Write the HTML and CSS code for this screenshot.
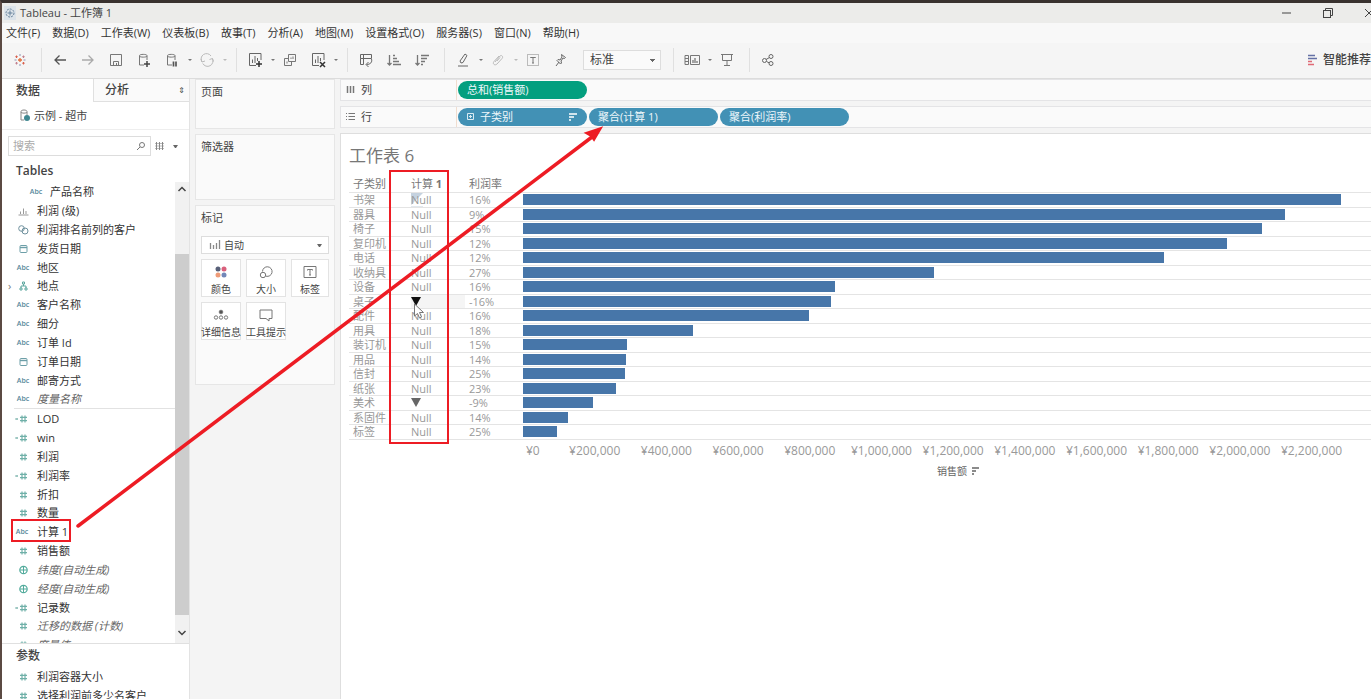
FILE: index.html
```html
<!DOCTYPE html>
<html lang="zh-CN">
<head>
<meta charset="utf-8">
<title>Tableau - 工作簿 1</title>
<link rel="stylesheet" href="styles.css">
</head>
<body>
<svg class="defs" aria-hidden="true">
  <symbol id="hash" viewBox="0 0 16 10"><path d="M5 3.3h7M5 6.7h7M7 1.5v7M10 1.5v7" fill="none" stroke="#6fb0a8" stroke-width="1.2"/></symbol>
  <symbol id="calchash" viewBox="0 0 16 10"><path d="M5 3.3h7M5 6.7h7M7 1.5v7M10 1.5v7" fill="none" stroke="#6fb0a8" stroke-width="1.2"/><path d="M0 5h3M2 4v2" stroke="#7fb5ae" stroke-width="1"/></symbol>
  <symbol id="date" viewBox="0 0 16 10"><rect x="5" y="1.5" width="7" height="7" rx="1" fill="none" stroke="#6d9fa8"/><path d="M5 3.5h7" stroke="#6d9fa8" stroke-width="1.4"/></symbol>
  <symbol id="globe" viewBox="0 0 16 10"><circle cx="8.500" cy="5" r="3.700" fill="none" stroke="#52ab9c" stroke-width="1.200"/><path d="M5 5h7M8.500 1.500v7" stroke="#52ab9c"/></symbol>
  <symbol id="plot" viewBox="0 0 20 20"><path d="M16 10V3.500H4.500v12H11M7.500 13V9.500M10 13V6M12.500 11V8" fill="none" stroke="#666"/></symbol>
</svg>
<div class="app">
  <header class="titlebar">
    <svg width="14" height="14" viewBox="0 0 14 14" fill="none"><rect x="1" y="0" width="12" height="14" fill="#dce3e9"/><circle cx="7" cy="7" r="4" stroke="#65809a" stroke-dasharray="2 1"/><path d="M7 4.500v5M4.500 7h5" stroke="#65809a"/></svg>
    <h1>Tableau - 工作簿 1</h1>
    <div class="window-buttons">
      <button aria-label="最小化"><svg width="12" height="12"><path d="M1 6h9" stroke="#444"/></svg></button>
      <button aria-label="还原"><svg width="12" height="12" fill="none" stroke="#444"><rect x="1.500" y="3.500" width="7" height="7"/><path d="M3.500 3V1.500h7v7H9"/></svg></button>
      <button aria-label="关闭"><svg width="12" height="12"><path d="M2 2l8 8M10 2l-8 8" stroke="#444"/></svg></button>
    </div>
  </header>
  <nav class="menu">
    <a href="#">文件(F)</a><a href="#">数据(D)</a><a href="#">工作表(W)</a><a href="#">仪表板(B)</a><a href="#">故事(T)</a><a href="#">分析(A)</a><a href="#">地图(M)</a><a href="#">设置格式(O)</a><a href="#">服务器(S)</a><a href="#">窗口(N)</a><a href="#">帮助(H)</a>
  </nav>
  <div class="toolbar">
    <div class="group first">
      <button aria-label="起始页"><svg viewBox="0 0 20 20" fill="none"><path d="M10 8v4M8 10h4" stroke="#e2703a" stroke-width="1.300"/><path d="M10 4v2M10 14v2M4.500 10h2M13.500 10h2" stroke="#8a93b5"/><path d="M6.500 5.500v2.500M5.300 6.700h2.500M13.500 12v2.500M12.200 13.200h2.500" stroke="#d9604e"/><path d="M13.500 5.500v2.500M12.200 6.700h2.500M6.500 12v2.500M5.300 13.200h2.500" stroke="#c2808e"/></svg></button>
    </div>
    <div class="group">
      <button aria-label="撤消"><svg viewBox="0 0 20 20"><path d="M16 10H5M9.500 5.500L5 10l4.500 4.500" fill="none" stroke="#555" stroke-width="1.300"/></svg></button>
      <button aria-label="重做"><svg viewBox="0 0 20 20"><path d="M4 10h11M10.500 5.500L15 10l-4.500 4.500" fill="none" stroke="#aaa" stroke-width="1.300"/></svg></button>
      <button aria-label="保存"><svg viewBox="0 0 20 20" fill="none" stroke="#777"><path d="M4.500 4.500h11v11h-11zM7.500 15v-3.500h5V15M10.500 13v2"/></svg></button>
      <button aria-label="新建数据源"><svg viewBox="0 0 20 20" fill="none" stroke="#777"><path d="M10 15H5.500V5.500C5.500 4 13 4 13 5.500V10M5.500 6c0 1.500 7.500 1.500 7.500 0"/><path d="M13 11v6M10 14h6" stroke="#444" stroke-width="1.500"/></svg></button>
      <button aria-label="暂停自动更新"><svg viewBox="0 0 20 20" fill="none" stroke="#777"><path d="M10 15H5.500V5.500C5.500 4 13 4 13 5.500V10M5.500 6c0 1.500 7.500 1.500 7.500 0"/><path d="M11.500 11.500v5M14 11.500v5" stroke="#555" stroke-width="1.700"/></svg></button><i class="dot"></i>
      <button aria-label="运行更新"><svg viewBox="0 0 20 20" fill="none" stroke="#bbb"><path d="M5 12a5.300 5.300 0 0 1 9-6M15.300 8.500a5.300 5.300 0 0 1-9.500 5M4 9l1 3 3-1M16.500 11.500l-1-3-3 1"/></svg></button><i class="dot pale"></i>
    </div>
    <div class="group">
      <button aria-label="新建工作表"><svg viewBox="0 0 20 20"><use href="#plot"/><path d="M14 11v6M11 14h6" stroke="#333" stroke-width="1.500"/></svg></button><i class="dot"></i>
      <button aria-label="复制"><svg viewBox="0 0 20 20" fill="none" stroke="#777"><path d="M8.500 4.500h7v7h-7zM8 8.500H4.500v7h7V12M11 9V7.500M13 9V6.500M7 13.500v-2"/></svg></button>
      <button class="spaced" aria-label="清除工作表"><svg viewBox="0 0 20 20"><use href="#plot"/><path d="M12 12l5 5M17 12l-5 5" stroke="#333" stroke-width="1.500"/></svg></button><i class="dot"></i>
    </div>
    <div class="group">
      <button aria-label="交换行和列"><svg viewBox="0 0 20 20" fill="none" stroke="#666"><path d="M4.500 4.500h11v4h-11zM4.500 8.500v6h3v-10M15.500 9c1 3-1 5.500-5 5.500M12.500 12l-2.500 2.500 2.500 2.500"/></svg></button>
      <button aria-label="升序排序"><svg viewBox="0 0 20 20" fill="none" stroke="#777"><path d="M5.500 5v10M3.500 13l2 2 2-2M9 5.500h2M9 8.500h4M9 11.500h6M9 14.500h8" stroke-width="1.300"/></svg></button>
      <button aria-label="降序排序"><svg viewBox="0 0 20 20" fill="none" stroke="#777"><path d="M5.500 5v10M3.500 13l2 2 2-2M9 5.500h8M9 8.500h6M9 11.500h4M9 14.500h2" stroke-width="1.300"/></svg></button><i class="tail"></i>
    </div>
    <div class="group">
      <button aria-label="突出显示"><svg viewBox="0 0 20 20" fill="none" stroke="#666"><path d="M8 13l-1-2 5-7 2 1.500-4 7zM5 16h10"/></svg></button><i class="dot"></i>
      <button aria-label="组成员"><svg viewBox="0 0 20 20" fill="none" stroke="#bbb"><path d="M7 12l5-6c2-1.500 3.500 1 2 2.500L9 14c-2 2-5 0-3-2.500L11 6M9 11l3-3.500"/></svg></button><i class="dot pale"></i>
      <button aria-label="显示标记标签"><svg viewBox="0 0 20 20" fill="none" stroke="#bbb"><rect x="4.500" y="4.500" width="11" height="11"/><path d="M7.500 8V7.500h5V8M10 7.500v5.500M9 13h2" stroke="#777"/></svg></button>
      <button aria-label="固定轴"><svg viewBox="0 0 20 20" fill="none" stroke="#666"><path d="M10.500 4.500l4 3-1 1-1.500-.5-2 3 .5 2-1 1L6 10.500l1-1 2 .5 2-3zM8 12l-3 4"/></svg></button>
      <select aria-label="适合"><option>标准</option></select><i class="tail"></i>
    </div>
    <div class="group">
      <button aria-label="显示卡"><svg viewBox="0 0 20 20" fill="none" stroke="#777"><path d="M3 5.500h3.500v9H3zM3 8.500h3M3 11.500h3M8.500 5.500h9v9h-9z"/><path d="M11 13v-3M13 13V8M15 13v-2" stroke-width="1.300"/></svg></button><i class="dot"></i>
      <button aria-label="演示模式"><svg viewBox="0 0 20 20" fill="none" stroke="#777"><path d="M4 4.500h12M5.500 4.500v6h9v-6M10 10.500V15M7 15.500h6"/></svg></button><i class="tail"></i>
    </div>
    <div class="group last">
      <button aria-label="共享"><svg viewBox="0 0 20 20" fill="none" stroke="#666"><circle cx="6.500" cy="10.500" r="2"/><circle cx="13" cy="6.500" r="2"/><circle cx="13" cy="13.500" r="2"/><path d="M8 9.500l3.500-2M8.500 11.500l3 1.500"/></svg></button>
    </div>
    <button class="showme"><svg width="12" height="12"><path d="M1 1.500h7M1 4.500h9" stroke="#6470a5" stroke-width="1.500"/><path d="M1 7.500h4M1 10.500h6" stroke="#e06a76" stroke-width="1.500"/></svg>智能推荐</button>
  </div>
  <main>
    <aside class="sidebar">
      <div class="tabs"><button class="active">数据</button><button>分析<i>⇕</i></button></div>
      <div class="source"><svg width="12" height="13" viewBox="0 0 12 13" fill="none"><path d="M5 11H2V2.500C2 .5 8 .5 8 2.500V6M2 3c0 1.500 6 1.500 6 0" stroke="#888"/><circle cx="8" cy="9" r="3" fill="#3f8891"/></svg>示例 - 超市</div>
      <div class="search">
        <label><input type="text" placeholder="搜索" aria-label="搜索"><svg width="10" height="10" fill="none" stroke="#777"><circle cx="6" cy="4" r="2.500"/><path d="M4 6L1 9"/></svg></label>
        <button aria-label="视图"><svg width="10" height="10"><path d="M0 2.500h9M0 5h9M0 7.500h9" stroke="#bbb"/><path d="M1.500 1v8M4.500 1v8M7.500 1v8" stroke="#888"/></svg></button>
        <button class="more" aria-label="更多"><i class="caret"></i></button>
      </div>
      <h2 class="tables">Tables</h2>
      <div class="fields">
        <div class="lists">
          <ul>
            <li class="nested"><b>Abc</b>产品名称</li>
            <li><svg viewBox="0 0 16 10"><path d="M3.500 9h10M5.500 8V5.500M8.500 8V2.500M11 8V5" stroke="#999"/></svg>利润 (级)</li>
            <li><svg viewBox="0 0 16 10" fill="none" stroke="#6d8f9c"><circle cx="6.500" cy="3.500" r="2.800"/><circle cx="10" cy="6" r="3"/></svg>利润排名前列的客户</li>
            <li><svg><use href="#date"/></svg>发货日期</li>
            <li><b>Abc</b>地区</li>
            <li class="folder"><svg viewBox="0 0 16 10" fill="none" stroke="#5fa8a0"><path d="M7.500 1h2v2h-2zM5 7h2v2H5zM10 7h2v2h-2zM8.500 3v2M6 7V5h5v2"/></svg>地点</li>
            <li><b>Abc</b>客户名称</li>
            <li><b>Abc</b>细分</li>
            <li><b>Abc</b>订单 Id</li>
            <li><svg><use href="#date"/></svg>订单日期</li>
            <li><b>Abc</b>邮寄方式</li>
            <li class="auto"><b>Abc</b>度量名称</li>
          </ul>
          <ul class="measures">
            <li><svg><use href="#calchash"/></svg>LOD</li>
            <li><svg><use href="#calchash"/></svg>win</li>
            <li><svg><use href="#hash"/></svg>利润</li>
            <li><svg><use href="#calchash"/></svg>利润率</li>
            <li><svg><use href="#hash"/></svg>折扣</li>
            <li><svg><use href="#hash"/></svg>数量</li>
            <li><b class="calc">Abc</b>计算 1</li>
            <li><svg><use href="#hash"/></svg>销售额</li>
            <li class="auto"><svg><use href="#globe"/></svg>纬度(自动生成)</li>
            <li class="auto"><svg><use href="#globe"/></svg>经度(自动生成)</li>
            <li><svg><use href="#calchash"/></svg>记录数</li>
            <li class="auto"><svg><use href="#hash"/></svg>迁移的数据 (计数)</li>
            <li class="auto"><svg><use href="#hash"/></svg>度量值</li>
          </ul>
        </div>
        <div class="scrollbar">
          <svg width="14" height="14" fill="none" stroke="#444" stroke-width="1.500"><path d="M3.500 9L7 5.500 10.500 9"/></svg>
          <div class="thumb"></div>
          <svg width="14" height="14" fill="none" stroke="#444" stroke-width="1.500"><path d="M3.500 5L7 8.500 10.500 5"/></svg>
        </div>
      </div>
      <div class="params">
        <h2>参数</h2>
        <ul><li><svg><use href="#hash"/></svg>利润容器大小</li><li><svg><use href="#hash"/></svg>选择利润前多少名客户</li></ul>
      </div>
    </aside>
    <div class="cards">
      <section class="card pages"><h3>页面</h3></section>
      <section class="card filters"><h3>筛选器</h3></section>
      <section class="card marks"><h3>标记</h3>
        <button class="marktype"><svg width="14" height="12"><path d="M2.500 10V4M5.500 10V6M8.500 10V4M11.500 10V1" stroke="#888" stroke-width="1.300"/></svg>自动<i class="caret"></i></button>
        <div class="tiles">
          <button><svg viewBox="0 0 16 16"><circle cx="5" cy="5" r="2.500" fill="#586079"/><circle cx="11" cy="5" r="2.500" fill="#d9607c"/><circle cx="5" cy="11" r="2.500" fill="#ee9b78"/><circle cx="11" cy="11" r="2.500" fill="#7287b8"/></svg>颜色</button>
          <button><svg viewBox="0 0 16 16" fill="none" stroke="#777"><path d="M4.500 7.500A4.800 4.800 0 1 1 8 12.200"/><circle cx="5" cy="11" r="2.700"/></svg>大小</button>
          <button><svg viewBox="0 0 16 16" fill="none" stroke="#777"><path d="M2 2.500h12v11H2zM5.500 6.500v-1h5v1M8 5.500V11M7 11h2"/></svg>标签</button>
          <button><svg viewBox="0 0 16 16" fill="none" stroke="#777"><circle cx="8" cy="5" r="1.800" fill="#555"/><circle cx="3" cy="10.500" r="1.700"/><circle cx="8" cy="10.500" r="1.700"/><circle cx="13" cy="10.500" r="1.700"/></svg>详细信息</button>
          <button><svg viewBox="0 0 16 16" fill="none" stroke="#777"><path d="M2 3h12v8.500h-3V14l-3-2.500H2z"/></svg>工具提示</button>
        </div>
      </section>
    </div>
    <div class="workspace">
      <div class="shelf"><div class="shelfname"><svg width="10" height="10"><path d="M1.500 1v7M4.500 1v7M7.500 1v7" stroke="#777" stroke-width="1.500"/></svg>列</div><div class="pills"><button class="pill green">总和(销售额)</button></div></div>
      <div class="shelf"><div class="shelfname"><svg width="10" height="10"><path d="M0 1.500h1M2.500 1.500H9M0 4.500h1M2.500 4.500H9M0 7.500h1M2.500 7.500H9" stroke="#777"/></svg>行</div><div class="pills">
        <button class="pill"><svg width="8" height="8" fill="none" stroke="#d9eaf2"><path d="M.5 .5h6v6h-6zM2 3.500h3M3.500 2v3"/></svg>子类别<svg class="sort" width="8" height="8"><path d="M0 1h8M0 4h5M0 7h2" stroke="#fff" stroke-width="1.300"/></svg></button><button class="pill">聚合(计算 1)</button><button class="pill">聚合(利润率)</button></div></div>
      <section class="sheet">
        <h2>工作表 6</h2>
        <table>
          <colgroup><col class="c-name"><col class="c-calc"><col class="c-rate"><col></colgroup>
          <thead><tr><th>子类别</th><th>计算 <strong>1</strong></th><th>利润率</th><th></th></tr></thead>
          <tbody>
            <tr class="marked"><td>书架</td><td>Null</td><td>16%</td><td><div class="bar" style="width:96.5%"></div></td></tr>
            <tr><td>器具</td><td>Null</td><td>9%</td><td><div class="bar" style="width:89.9%"></div></td></tr>
            <tr><td>椅子</td><td>Null</td><td>15%</td><td><div class="bar" style="width:87.1%"></div></td></tr>
            <tr><td>复印机</td><td>Null</td><td>12%</td><td><div class="bar" style="width:83%"></div></td></tr>
            <tr><td>电话</td><td>Null</td><td>12%</td><td><div class="bar" style="width:75.6%"></div></td></tr>
            <tr><td>收纳具</td><td>Null</td><td>27%</td><td><div class="bar" style="width:48.5%"></div></td></tr>
            <tr><td>设备</td><td>Null</td><td>16%</td><td><div class="bar" style="width:36.8%"></div></td></tr>
            <tr class="hover"><td>桌子</td><td><i class="down"></i></td><td>-16%</td><td><div class="bar" style="width:36.3%"></div></td></tr>
            <tr><td>配件</td><td>Null</td><td>16%</td><td><div class="bar" style="width:33.7%"></div></td></tr>
            <tr><td>用具</td><td>Null</td><td>18%</td><td><div class="bar" style="width:20%"></div></td></tr>
            <tr><td>装订机</td><td>Null</td><td>15%</td><td><div class="bar" style="width:12.3%"></div></td></tr>
            <tr><td>用品</td><td>Null</td><td>14%</td><td><div class="bar" style="width:12.1%"></div></td></tr>
            <tr><td>信封</td><td>Null</td><td>25%</td><td><div class="bar" style="width:12%"></div></td></tr>
            <tr><td>纸张</td><td>Null</td><td>23%</td><td><div class="bar" style="width:11%"></div></td></tr>
            <tr><td>美术</td><td><i class="down"></i></td><td>-9%</td><td><div class="bar" style="width:8.3%"></div></td></tr>
            <tr><td>系固件</td><td>Null</td><td>14%</td><td><div class="bar" style="width:5.3%"></div></td></tr>
            <tr class="ends"><td>标签</td><td>Null</td><td>25%</td><td><div class="bar" style="width:4%"></div></td></tr>
          </tbody>
        </table>
        <div class="axis"><div class="ticks"><span>¥0</span><span>¥200,000</span><span>¥400,000</span><span>¥600,000</span><span>¥800,000</span><span>¥1,000,000</span><span>¥1,200,000</span><span>¥1,400,000</span><span>¥1,600,000</span><span>¥1,800,000</span><span>¥2,000,000</span><span>¥2,200,000</span></div>
        <div class="axistitle">销售额 <svg width="8" height="8"><path d="M1 1h7M1 4h4M1 7h2" stroke="#666" stroke-width="1.300"/></svg></div></div>
      </section>
    </div>
  </main>
  <svg class="annotations" width="620" height="560" fill="none" stroke="#ed1c24" stroke-width="2">
    <path d="M414.500 304v12l3-2.500 2 4.500 2-1-2-4.500h4z" fill="#fff" stroke="#777" stroke-width="1"/>
    <rect x="390" y="171" width="58" height="272"/>
    <rect x="12" y="520" width="58" height="21"/>
    <path d="M78 526L592 137" stroke-width="3.500" stroke-linecap="round"/>
    <path d="M601 128l-7 12-3-4-5-3z" fill="#ed1c24"/>
  </svg>
</div>
</body>
</html>
```
FILE: styles.css
```css
* { box-sizing: border-box; }
body { margin: 0; font: 11px/16px "Open Sans", "Noto Sans CJK SC", sans-serif; color: #444; }
button, input, select { font: inherit; color: inherit; border: 0; background: none; padding: 0; margin: 0; }
h1, h2, h3, ul { margin: 0; padding: 0; font-weight: 400; font-size: 11px; }
ul { list-style: none; }
svg { display: block; flex: none; }
.defs { position: absolute; width: 0; height: 0; }
.app { position: relative; height: 100vh; overflow: hidden; display: flex; flex-direction: column; border-top: 3px solid #39322f; border-left: 2px solid #5b4a43; background: #f4f4f4; }
.titlebar { display: flex; align-items: center; gap: 3px; height: 20px; flex: none; padding-left: 1px; background: #ececea; }
.titlebar h1 { line-height: 20px; }
.window-buttons { margin-left: auto; display: flex; gap: 29px; margin-right: -4px; }
.menu { display: flex; gap: 12px; height: 20px; flex: none; padding-left: 4px; line-height: 20px; background: #f8f8f8; white-space: nowrap; }
.menu a { color: #333; text-decoration: none; }
.toolbar { display: flex; align-items: center; height: 36px; flex: none; padding-bottom: 2px; border-bottom: 1px solid #dcdcdc; background: #f5f5f5; }
.group { display: flex; align-items: center; height: 24px; padding: 0 4px 0 8px; border-right: 1px solid #e0e0e0; }
.group.first { padding: 0 11px 0 8px; }
.group.last { border: 0; }
.group button { width: 20px; height: 20px; }
.group button + button { margin-left: 8px; }
.group .spaced { margin-left: 8px; }
.group svg { width: 20px; height: 20px; }
.dot { width: 15px; display: flex; justify-content: center; }
.dot::before { content: ""; border: 2px solid transparent; border-top-color: #777; border-bottom: 0; }
.dot.pale::before { border-top-color: #bbb; }
.tail { width: 8px; }
select { width: 78px; height: 20px; margin-left: 12px; padding-left: 6px; border: 1px solid #ddd; background: #fafafa; font-size: 12px; line-height: 18px; appearance: none; background-image: linear-gradient(45deg, transparent 50%, #666 50%), linear-gradient(-45deg, transparent 50%, #666 50%); background-image: conic-gradient(from -45deg at 50% 100%, #666 90deg, transparent 0); background-size: 5px 3px; background-position: 66px 8px; background-repeat: no-repeat; }
.showme { display: flex; align-items: center; gap: 4px; margin-left: auto; font-size: 12px; font-weight: 500; white-space: nowrap; }
main { flex: 1; min-height: 0; display: grid; grid-template-columns: 188px 140px minmax(0, 1fr); column-gap: 5px; }
.sidebar { display: flex; flex-direction: column; min-height: 0; background: #fff; border-right: 1px solid #e3e3e3; }
.tabs { display: grid; grid-template-columns: 91px 1fr; height: 23px; flex: none; }
.tabs button { display: flex; align-items: center; justify-content: space-between; padding: 0 4px 0 11px; border-left: 1px solid #e0e0e0; border-bottom: 1px solid #e0e0e0; background: #fafafa; font-size: 12px; font-weight: 500; }
.tabs .active { padding-left: 14px; border: 0; background: #fff; }
.tabs i { font: 8px "DejaVu Sans", sans-serif; }
.source { display: flex; align-items: center; gap: 3px; height: 28px; flex: none; padding-left: 17px; border-bottom: 1px solid #eee; }
.search { display: flex; align-items: center; gap: 4px; height: 20px; flex: none; margin: 6px 0 0 6px; }
.search label { width: 143px; height: 20px; display: flex; align-items: center; border: 1px solid #ddd; padding: 0 4px; }
.search input { flex: 1; min-width: 0; }
.search input::placeholder { color: #aaa; opacity: 1; }
.more { margin-left: 4px; }
.caret { display: block; width: 5px; border: solid transparent; border-width: 3px 2px 0; border-top-color: #666; }
.sidebar h2 { padding-left: 14px; font-size: 12px; font-weight: 600; flex: none; }
.sidebar .tables { padding-top: 4px; line-height: 22px; }
.fields { display: flex; flex: 1; min-height: 0; }
.lists { flex: 1; overflow: hidden; }
.sidebar li { display: flex; align-items: center; height: 19px; padding-left: 13px; gap: 6px; white-space: nowrap; color: #333; }
.sidebar li:nth-child(6n) { height: 18px; }
.sidebar li svg { width: 16px; height: 10px; }
.sidebar li b { width: 16px; text-align: center; font: 600 7px/10px "Open Sans", sans-serif; color: #55879a; }
.sidebar li b.calc { text-indent: -2px; }
.sidebar li.nested { padding-left: 26px; }
.sidebar li.auto { font-style: italic; color: #666; }
.folder::before { content: "›"; width: 6px; margin: 0 -6px 0 -7px; color: #777; }
.sidebar .folder svg { margin-left: 1px; }
.measures { margin-left: 12px; border-top: 1px solid #e2e2e2; }
.sidebar .measures li { padding-left: 1px; }
.scrollbar { width: 14px; display: grid; grid-template-rows: 16px 56fr 359fr 14px 14px; background: #f1f1f1; }
.thumb { grid-row: 3; background: #cdcdcd; }
.scrollbar svg:last-child { grid-row: 4; margin-top: 11px; }
.params { height: 56px; flex: none; border-top: 1px solid #e0e0e0; overflow: hidden; }
.params h2 { line-height: 23px; font-weight: 500; }
.cards { display: flex; flex-direction: column; gap: 5px; }
.card { border: 1px solid #e6e6e6; background: #fafafa; padding: 4px 5px; }
.pages { height: 50px; }
.filters { height: 66px; }
.marks { height: 180px; }
.marktype { display: flex; align-items: center; width: 100%; height: 18px; margin-top: 10px; padding: 0 6px; gap: 2px; border: 1px solid #ddd; background: #fff; font-size: 10px; }
.marktype .caret { margin-left: auto; }
.tiles { display: grid; grid-template-columns: 40px 40px 1fr; gap: 5px; margin-top: 5px; }
.tiles button { display: flex; flex-direction: column; align-items: center; justify-content: space-between; height: 38px; padding-top: 4px; border: 1px solid #e3e3e3; font-size: 10px; line-height: 14px; white-space: nowrap; background: #fff; }
.tiles svg { width: 16px; height: 16px; }
.workspace { display: flex; flex-direction: column; gap: 5px; min-width: 0; }
.shelf { display: flex; height: 22px; flex: none; border: solid #e4e4e6; border-width: 1px 0 1px 1px; background: #fafafa; }
.shelfname { width: 116px; display: flex; align-items: center; gap: 5px; padding-left: 5px; border-right: 1px solid #f0ddcf; }
.pills { display: flex; align-items: center; gap: 2px; padding-left: 1px; }
.pill { display: flex; align-items: center; gap: 5px; width: 129px; height: 18px; padding: 0 10px 0 9px; border-radius: 9px; background: #4291b5; color: #eef7fb; }
.pill.green { background: #039f7f; }
.sort { margin-left: auto; }
.sheet { flex: 1; padding: 12px 0 0 8px; border: solid #dedede; border-width: 1px 0 0 1px; background: #fff; }
.sheet h2 { font-size: 17px; line-height: 20px; color: #777; }
table { width: 100%; margin-top: 9px; border-collapse: collapse; table-layout: fixed; line-height: 13px; color: #999; }
.c-name { width: 62px; }
.c-calc { width: 54px; }
.c-rate { width: 58px; }
th, td { padding: 0; border-bottom: 1px solid #e4e4e4; text-align: left; font-weight: 400; white-space: nowrap; }
th { height: 17px; color: #777; }
th:first-child, td:first-child { padding-left: 4px; }
th:nth-child(3), td:nth-child(3) { padding-left: 4px; }
td { height: 14px; }
tbody tr:nth-child(odd) td { height: 15px; }
.marked td:nth-child(2) { background: linear-gradient(135deg, #c5d2df 9px, transparent 9px); }
.hover td:nth-child(2) { background: #f5f5f5; }
.down { display: block; width: 10px; border: solid transparent; border-width: 9px 5px 0; border-top-color: #666; }
.hover .down { border-top-color: #111; }
.bar { height: 11px; background: #4776a9; }
.axis { margin-left: 174px; color: #999; }
.ticks { display: flex; padding-top: 3px; white-space: nowrap; font-size: 12px; }
.ticks span { flex: 0 0 8.455%; display: flex; justify-content: center; }
.ticks span:first-child { flex-basis: 4.228%; justify-content: flex-start; padding-left: 3px; }
.axistitle { display: flex; align-items: center; justify-content: center; gap: 4px; padding-top: 4px; margin-right: -22px; font-size: 10px; color: #666; }
.annotations { position: absolute; top: -3px; left: -2px; pointer-events: none; }
```
